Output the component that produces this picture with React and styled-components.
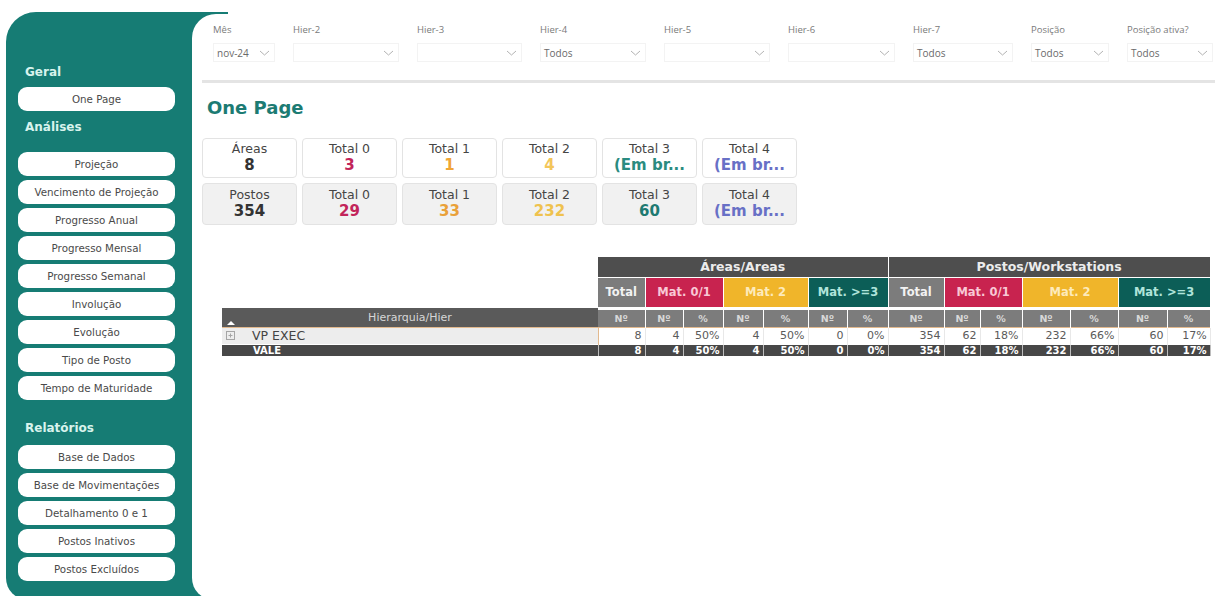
import React from 'react';
import styled, { createGlobalStyle } from 'styled-components';

const TEAL = '#167c74';
const WIDE = "'DejaVu Sans', 'Open Sans', sans-serif";
const UI = "'Open Sans', 'Liberation Sans', sans-serif";

const GlobalStyle = createGlobalStyle`
  html, body {
    margin: 0;
    padding: 0;
    background: #fff;
    overflow: hidden;
  }
  body {
    font-family: ${UI};
  }
  * {
    box-sizing: border-box;
  }
`;

/* ---------- shell ---------- */

const Shell = styled.div`
  display: flex;
  height: 588px;
  margin: 12px 0 0 6px;
  /* teal only reaches a little past the sidebar, enough to show behind the panel corners */
  background: linear-gradient(90deg, ${TEAL} 0 222px, transparent 222px);
  border-radius: 30px 0 0 22px;
`;

const Sidebar = styled.nav`
  width: 186px;
  flex-shrink: 0;
  padding: 52px 0 0 12px;
  display: flex;
  flex-direction: column;
`;

const SectionTitle = styled.h3`
  margin: ${({ $top }) => $top}px 0 ${({ $bottom }) => $bottom}px 7px;
  font-family: ${WIDE};
  font-size: 12px;
  line-height: 16px;
  font-weight: 700;
  color: #d8f3ed;
`;

const NavList = styled.div`
  display: flex;
  flex-direction: column;
  gap: 4px;
  width: 157px;
`;

const NavButton = styled.button`
  height: 24px;
  padding: 0;
  border: none;
  border-radius: 9px;
  background: #fff;
  font-family: ${WIDE};
  font-size: 10.3px;
  color: #4a4a4a;
  white-space: nowrap;
  cursor: pointer;
`;

const Panel = styled.main`
  flex: 1;
  min-width: 0;
  margin-top: 2px;
  padding-left: 10px;
  background: #fff;
  border-radius: 24px 0 0 22px;
`;

/* ---------- filters ---------- */

const FilterBar = styled.div`
  display: flex;
  gap: 18px;
  padding: 10px 0 18px 11px;
  border-bottom: 3px solid #e4e4e4;
`;

const Filter = styled.div`
  width: ${({ $w }) => $w}px;
  flex-shrink: 0;
`;

const FilterLabel = styled.div`
  font-size: 9.5px;
  line-height: 11px;
  color: #7a7a7a;
  white-space: nowrap;
`;

const SelectBox = styled.div`
  height: 19px;
  margin-top: 8px;
  padding: 0 4px 0 3px;
  display: flex;
  align-items: center;
  justify-content: space-between;
  border: 1px solid #f3f3f3;
  font-size: 10px;
  color: #6a6a6a;
`;

const Chevron = () => (
  <svg width="11" height="6" viewBox="0 0 11 6">
    <polyline points="1,1 5.5,5 10,1" fill="none" stroke="#b3b3b3" strokeWidth="1" />
  </svg>
);

/* ---------- cards ---------- */

const Title = styled.h1`
  margin: 13px 0 0 5px;
  font-family: ${WIDE};
  font-size: 18px;
  line-height: 24px;
  font-weight: 700;
  color: #1c7b73;
`;

const CardGrid = styled.div`
  display: grid;
  grid-template-columns: repeat(6, 95px);
  grid-template-rows: 40px 42px;
  gap: 5px;
  margin-top: 18px;
`;

const Card = styled.div`
  display: flex;
  flex-direction: column;
  align-items: center;
  justify-content: center;
  border: 1px solid #e3e3e3;
  border-radius: 4px;
  background: ${({ $alt }) => ($alt ? '#f1f1f1' : '#fff')};
`;

const CardLabel = styled.div`
  font-family: ${WIDE};
  font-size: 12.5px;
  line-height: 14px;
  color: #454545;
`;

const CardValue = styled.div`
  font-family: ${WIDE};
  font-size: 15px;
  line-height: 19px;
  font-weight: 700;
  color: ${({ $color }) => $color};
  white-space: nowrap;
`;

/* ---------- matrix ---------- */

const Matrix = styled.table`
  width: 988px;
  margin: 32px 0 0 20px;
  table-layout: fixed;
  border-collapse: collapse;
  font-family: ${WIDE};
`;

const GroupHead = styled.th`
  height: 20px;
  padding: 0;
  background: #4e4e4e;
  color: #ececec;
  font-size: 12.5px;
  font-weight: 700;
  border-right: 1px solid #fff;
  border-bottom: 1px solid #fff;
`;

const BandHead = styled.th`
  height: 31px;
  padding: 0;
  background: ${({ $bg }) => $bg};
  color: ${({ $fg }) => $fg};
  font-size: 11.5px;
  font-weight: 700;
  white-space: nowrap;
  border-right: 1px solid #fff;
  border-bottom: 3px solid #fff;
`;

const HierHead = styled.th`
  position: relative;
  height: 19px;
  padding: 0;
  background: #5a5a5a;
  color: #d6d6d6;
  font-size: 11px;
  font-weight: 400;
`;

const SortMark = styled.span`
  position: absolute;
  left: 5px;
  bottom: 2px;
  width: 0;
  height: 0;
  border-left: 4px solid transparent;
  border-right: 4px solid transparent;
  border-bottom: 4px solid #fff;
`;

const SubHead = styled.th`
  padding: 0;
  background: #7c7c7c;
  color: #d8d8d8;
  font-size: 9.5px;
  font-weight: 700;
  border-right: 1px solid #fff;
`;

const DataCell = styled.td`
  height: 17px;
  padding: 0 3px 0 0;
  text-align: right;
  background: #fff;
  color: #5a5a5a;
  font-size: 11px;
  border-top: 1px solid #e2b98e;
  border-right: 1px solid #e8e8e8;
  border-left: ${({ $edge }) => ($edge ? '1px solid #e2b98e' : 'none')};
`;

const HierCell = styled.td`
  padding: 0 0 0 4px;
  background: #ededed;
  border-top: 1px solid #e2b98e;
  font-size: 12.5px;
  color: #444;
`;

const HierName = styled.span`
  display: inline-flex;
  align-items: center;
  gap: 17px;
`;

const TotalCell = styled.td`
  height: 12px;
  padding: 0 3px 0 0;
  text-align: ${({ $left }) => ($left ? 'left' : 'right')};
  padding-left: ${({ $left }) => ($left ? '31px' : '0')};
  background: #474747;
  color: #fff;
  font-size: 10px;
  font-weight: 700;
  line-height: 11px;
  border-top: 1px solid #fff;
  border-right: 1px solid #bdbdbd;
`;

const ExpandIcon = () => (
  <svg width="9" height="9" viewBox="0 0 9 9">
    <rect x="0.5" y="0.5" width="8" height="8" fill="none" stroke="#a5a5a5" />
    <path d="M2.5 4.5h4M4.5 2.5v4" stroke="#a5a5a5" />
  </svg>
);

/* ---------- data ---------- */

const filters = [
  { label: 'Mês', value: 'nov-24', w: 62 },
  { label: 'Hier-2', value: '', w: 106 },
  { label: 'Hier-3', value: '', w: 105 },
  { label: 'Hier-4', value: 'Todos', w: 106 },
  { label: 'Hier-5', value: '', w: 106 },
  { label: 'Hier-6', value: '', w: 107 },
  { label: 'Hier-7', value: 'Todos', w: 100 },
  { label: 'Posição', value: 'Todos', w: 78 },
  { label: 'Posição ativa?', value: 'Todos', w: 86 },
];

const navSections = [
  { title: 'Geral', top: 0, bottom: 7, items: ['One Page'] },
  {
    title: 'Análises',
    top: 8,
    bottom: 17,
    items: [
      'Projeção',
      'Vencimento de Projeção',
      'Progresso Anual',
      'Progresso Mensal',
      'Progresso Semanal',
      'Involução',
      'Evolução',
      'Tipo de Posto',
      'Tempo de Maturidade',
    ],
  },
  {
    title: 'Relatórios',
    top: 20,
    bottom: 9,
    items: ['Base de Dados', 'Base de Movimentações', 'Detalhamento 0 e 1', 'Postos Inativos', 'Postos Excluídos'],
  },
];

const cards = [
  [
    { label: 'Áreas', value: '8', color: '#333' },
    { label: 'Total 0', value: '3', color: '#c2245a' },
    { label: 'Total 1', value: '1', color: '#f0a535' },
    { label: 'Total 2', value: '4', color: '#f3c65a' },
    { label: 'Total 3', value: '(Em br...', color: '#2a8b80' },
    { label: 'Total 4', value: '(Em br...', color: '#6870c6' },
  ],
  [
    { label: 'Postos', value: '354', color: '#333' },
    { label: 'Total 0', value: '29', color: '#c2245a' },
    { label: 'Total 1', value: '33', color: '#e9a13a' },
    { label: 'Total 2', value: '232', color: '#efc24e' },
    { label: 'Total 3', value: '60', color: '#1e7a72' },
    { label: 'Total 4', value: '(Em br...', color: '#6870c6' },
  ],
];

const colWidths = [376, 47, 38, 40, 40, 45, 39, 41, 56, 36, 42, 48, 48, 49, 43];

const bands = [
  { label: 'Total', span: 1, bg: '#7c7c7c', fg: '#f2f2f2' },
  { label: 'Mat. 0/1', span: 2, bg: '#c8234f', fg: '#f8c8d5' },
  { label: 'Mat. 2', span: 2, bg: '#f0b52a', fg: '#fdeabb' },
  { label: 'Mat. >=3', span: 2, bg: '#0c5e57', fg: '#b0e4db' },
];

const subHeads = ['Nº', 'Nº', '%', 'Nº', '%', 'Nº', '%'];

const rowValues = ['8', '4', '50%', '4', '50%', '0', '0%', '354', '62', '18%', '232', '66%', '60', '17%'];

const App = () => (
  <>
    <GlobalStyle />
    <Shell>
      <Sidebar>
        {navSections.map((section) => (
          <React.Fragment key={section.title}>
            <SectionTitle $top={section.top} $bottom={section.bottom}>
              {section.title}
            </SectionTitle>
            <NavList>
              {section.items.map((item) => (
                <NavButton key={item}>{item}</NavButton>
              ))}
            </NavList>
          </React.Fragment>
        ))}
      </Sidebar>

      <Panel>
        <FilterBar>
          {filters.map((f) => (
            <Filter key={f.label} $w={f.w}>
              <FilterLabel>{f.label}</FilterLabel>
              <SelectBox>
                <span>{f.value}</span>
                <Chevron />
              </SelectBox>
            </Filter>
          ))}
        </FilterBar>

        <Title>One Page</Title>

        <CardGrid>
          {cards.map((row, r) =>
            row.map((c, i) => (
              <Card key={`${r}-${i}`} $alt={r === 1}>
                <CardLabel>{c.label}</CardLabel>
                <CardValue $color={c.color}>{c.value}</CardValue>
              </Card>
            )),
          )}
        </CardGrid>

        <Matrix>
          <colgroup>
            {colWidths.map((w, i) => (
              <col key={i} style={{ width: w }} />
            ))}
          </colgroup>
          <thead>
            <tr>
              <th rowSpan={2} />
              <GroupHead colSpan={7}>Áreas/Areas</GroupHead>
              <GroupHead colSpan={7}>Postos/Workstations</GroupHead>
            </tr>
            <tr>
              {[...bands, ...bands].map((b, i) => (
                <BandHead key={i} colSpan={b.span} $bg={b.bg} $fg={b.fg}>
                  {b.label}
                </BandHead>
              ))}
            </tr>
            <tr>
              <HierHead>
                Hierarquia/Hier
                <SortMark />
              </HierHead>
              {[...subHeads, ...subHeads].map((s, i) => (
                <SubHead key={i}>{s}</SubHead>
              ))}
            </tr>
          </thead>
          <tbody>
            <tr>
              <HierCell>
                <HierName>
                  <ExpandIcon />
                  VP EXEC
                </HierName>
              </HierCell>
              {rowValues.map((v, i) => (
                <DataCell key={i} $edge={i === 0}>
                  {v}
                </DataCell>
              ))}
            </tr>
            <tr>
              <TotalCell $left>VALE</TotalCell>
              {rowValues.map((v, i) => (
                <TotalCell key={i}>{v}</TotalCell>
              ))}
            </tr>
          </tbody>
        </Matrix>
      </Panel>
    </Shell>
  </>
);

export default App;
